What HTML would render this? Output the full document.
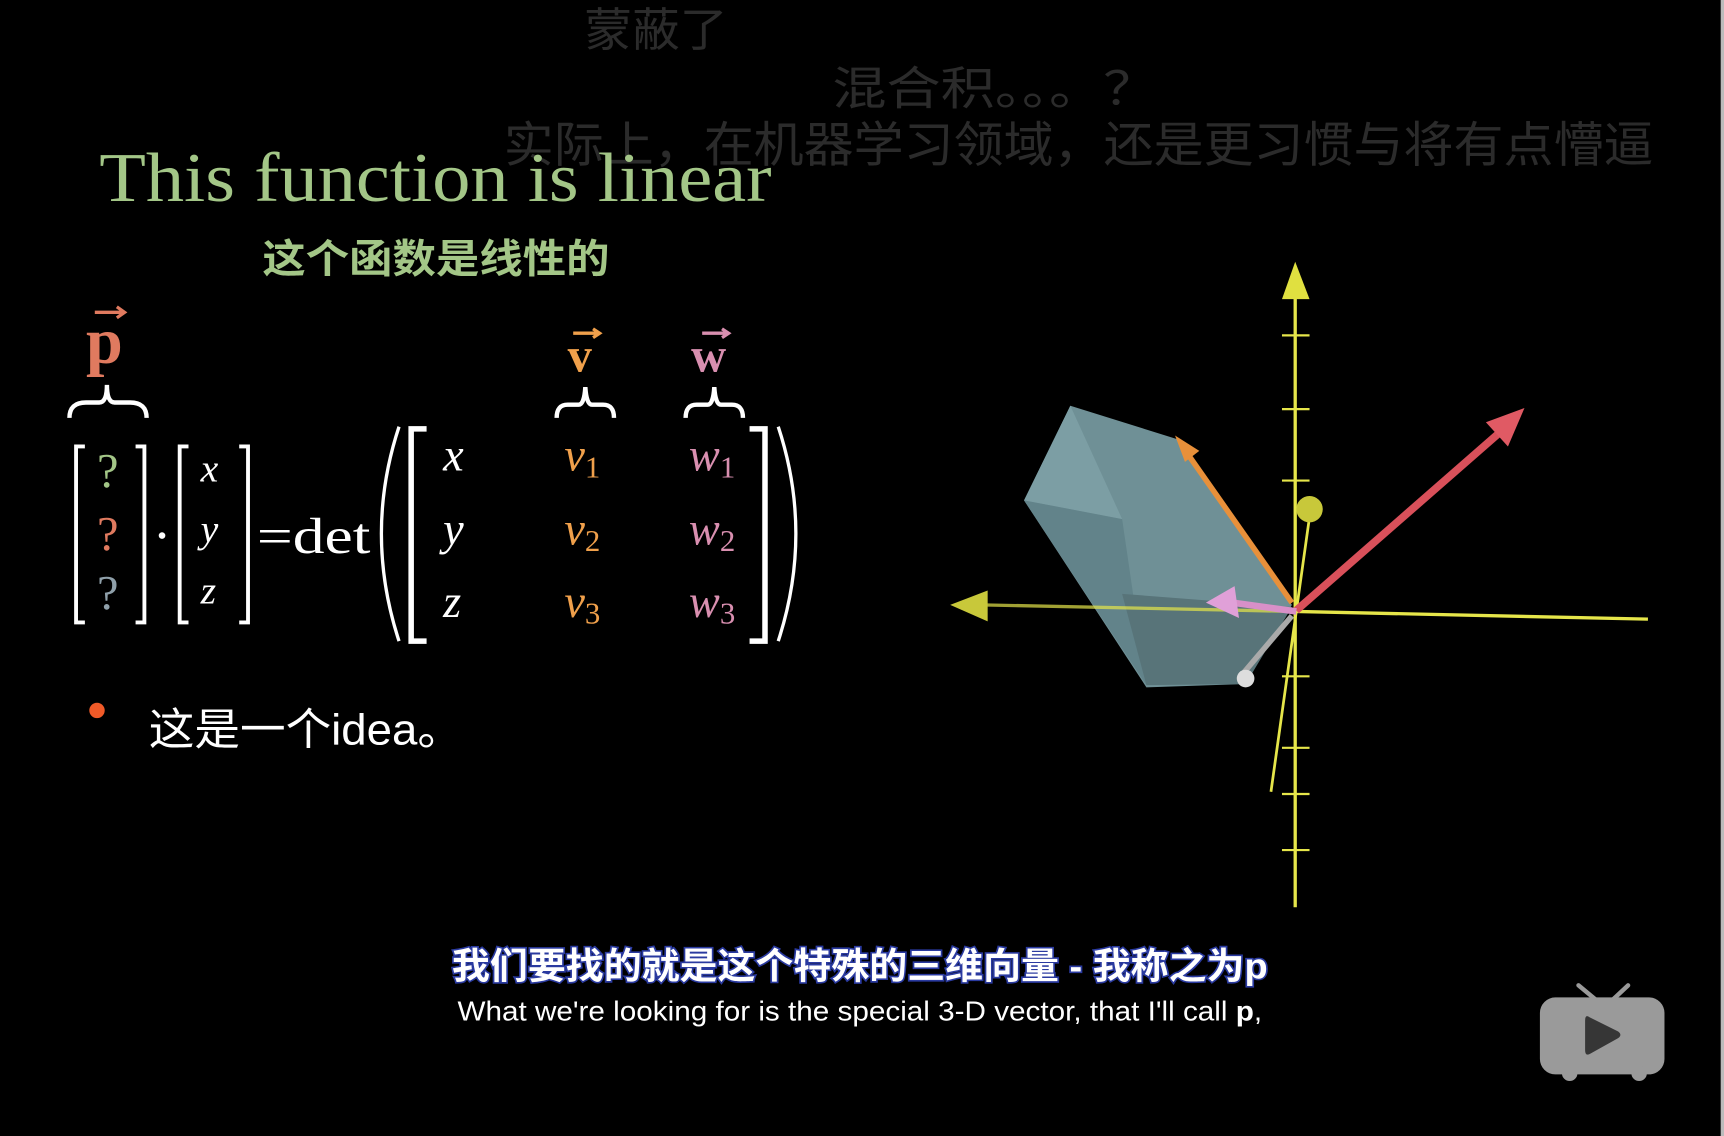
<!DOCTYPE html>
<html><head><meta charset="utf-8"><style>
html,body{margin:0;padding:0;background:#000;width:1724px;height:1136px;overflow:hidden}
svg{display:block}
.s{font-family:"Liberation Serif",serif}
.c{font-family:"Liberation Sans","Noto Sans CJK SC",sans-serif}
</style></head><body>
<svg width="1724" height="1136" viewBox="0 0 1564 1033" preserveAspectRatio="none" xmlns="http://www.w3.org/2000/svg">
<rect width="1564" height="1033" fill="#000"/>
<rect x="1561" y="0" width="3" height="1033" fill="#bbb"/>
<g class="c" fill="#2b2b2b" font-size="42">
<text x="530" y="42" textLength="130" lengthAdjust="spacingAndGlyphs">蒙蔽了</text>
<text x="755" y="95" textLength="295" lengthAdjust="spacingAndGlyphs">混合积。。。？</text>
<text x="457" y="147" font-size="44" textLength="1043" lengthAdjust="spacingAndGlyphs">实际上，在机器学习领域，还是更习惯与将有点懵逼</text>
</g>
<text class="s" x="90" y="183" font-size="64" fill="#a3c687" textLength="610" lengthAdjust="spacingAndGlyphs">This function is linear</text>
<text class="c" x="238" y="248" font-size="36" font-weight="bold" fill="#a3c687" textLength="315" lengthAdjust="spacingAndGlyphs">这个函数是线性的</text>
<g class="s" font-weight="bold">
<text x="78" y="330" font-size="60" fill="#e07a5f">p</text>
<text x="515" y="338" font-size="44" fill="#f0a04b">v</text>
<text x="627" y="338" font-size="44" fill="#d98fb0">w</text>
</g>
<g stroke-width="3" fill="none">
<path d="M86 284 H112 M106 279 L113 284 L106 289" stroke="#e07a5f"/>
<path d="M520 303 H543 M538 299 L544 303 L538 307" stroke="#f0a04b"/>
<path d="M637 303 H660 M655 299 L661 303 L655 307" stroke="#d98fb0"/>
</g>
<g stroke="#fff" stroke-width="4" fill="none">
<path d="M63 380 Q63 366 78 366 H90 Q97 366 97 350 Q97 366 104 366 H118 Q133 366 133 380"/>
<path d="M505 380 Q505 368 515 368 H525 Q530 368 531 352 Q532 368 537 368 H547 Q557 368 557 380"/>
<path d="M622 380 Q622 368 632 368 H642 Q647 368 648 352 Q649 368 654 368 H664 Q674 368 674 380"/>
</g>
<g stroke="#fff" stroke-width="3.5" fill="none">
<path d="M77 406 H69 V566 H77"/><path d="M123 406 H131 V566 H123"/>
<path d="M171 406 H163 V566 H171"/><path d="M217 406 H225 V566 H217"/>
<path d="M387 390 H373 V583 H387" stroke-width="5"/><path d="M680 390 H694 V583 H680" stroke-width="5"/>
<path d="M362 388 Q330 485 362 583" stroke-width="3"/>
<path d="M706 388 Q738 485 706 583" stroke-width="3"/>
</g>
<g class="s" font-size="44">
<text x="88" y="443" fill="#a3c687">?</text>
<text x="88" y="500" fill="#e07a5f">?</text>
<text x="88" y="554" fill="#8fa0aa">?</text>
</g>
<circle cx="147" cy="487" r="3" fill="#fff"/>
<g class="s" font-style="italic" fill="#fff">
<text x="182" y="438" font-size="36">x</text>
<text x="182" y="493" font-size="36">y</text>
<text x="182" y="549" font-size="36">z</text>
<text x="402" y="428" font-size="42">x</text>
<text x="402" y="495" font-size="42">y</text>
<text x="402" y="561" font-size="42">z</text>
</g>
<text class="s" x="233" y="503" font-size="46" fill="#fff" textLength="103" lengthAdjust="spacingAndGlyphs">=det</text>
<g class="s" font-size="42" font-style="italic">
<text x="512" y="428" fill="#f0a04b">v<tspan font-size="28" font-style="normal" dy="6">1</tspan></text>
<text x="512" y="495" fill="#f0a04b">v<tspan font-size="28" font-style="normal" dy="6">2</tspan></text>
<text x="512" y="561" fill="#f0a04b">v<tspan font-size="28" font-style="normal" dy="6">3</tspan></text>
<text x="625" y="428" fill="#d98fb0">w<tspan font-size="28" font-style="normal" dy="6">1</tspan></text>
<text x="625" y="495" fill="#d98fb0">w<tspan font-size="28" font-style="normal" dy="6">2</tspan></text>
<text x="625" y="561" fill="#d98fb0">w<tspan font-size="28" font-style="normal" dy="6">3</tspan></text>
</g>
<circle cx="88" cy="646" r="7" fill="#f05a28"/>
<text class="c" x="135" y="677" font-size="40" fill="#fff" textLength="285" lengthAdjust="spacingAndGlyphs">这是一个idea。</text>
<g stroke="#e6e64a" stroke-width="3" fill="none">
<line x1="1175" y1="265" x2="1175" y2="825"/>
<line x1="1175" y1="556" x2="1495" y2="563"/>
<line x1="1153" y1="720" x2="1188" y2="470" stroke-width="2.5"/>
<path d="M1163 305H1188M1163 372H1188M1163 437H1188M1163 615H1188M1163 680H1188M1163 722H1188M1163 773H1188" stroke-width="2"/>
</g>
<polygon points="1175,238 1163,272 1188,272" fill="#e0e040"/>
<circle cx="1188" cy="463" r="12" fill="#c8c83a"/>
<polygon points="971,369 1070,400 1172,550 1130,622 1040,625 929,455" fill="#6f9096"/>
<polygon points="971,369 1018,472 929,455" fill="#7c9ea4"/>
<polygon points="929,455 1018,472 1040,623" fill="#62838a"/>
<polygon points="1018,540 1172,552 1130,622 1040,623" fill="#587479"/>
<line x1="890" y1="550" x2="1175" y2="556" stroke="#e6e64a" stroke-width="3" opacity="0.7"/>
<polygon points="862,550 896,537 896,565" fill="#c8c83a"/>
<line x1="1072" y1="405" x2="1172" y2="548" stroke="#e8903a" stroke-width="5"/>
<polygon points="1066,396 1088,410 1075,420" fill="#e8903a"/>
<line x1="1176" y1="555" x2="1370" y2="385" stroke="#d9505a" stroke-width="7"/>
<polygon points="1383,371 1348,384 1368,406" fill="#e05a64"/>
<line x1="1176" y1="556" x2="1118" y2="548" stroke="#d890c8" stroke-width="6"/>
<polygon points="1094,548 1120,533 1124,562" fill="#e0a0d8"/>
<line x1="1172" y1="560" x2="1128" y2="612" stroke="#aaa" stroke-width="5"/>
<circle cx="1130" cy="617" r="8" fill="#ddd"/>
<text class="c" x="410" y="890" font-size="33" font-weight="bold" fill="#fff" stroke="#2a3aa0" stroke-width="3" paint-order="stroke" textLength="740" lengthAdjust="spacingAndGlyphs">我们要找的就是这个特殊的三维向量 - 我称之为p</text>
<text class="c" x="415" y="928" font-size="25" fill="#fff" textLength="730" lengthAdjust="spacingAndGlyphs">What we're looking for is the special 3-D vector, that I'll call <tspan font-weight="bold">p</tspan>,</text>
<g fill="#9a9a9a">
<line x1="1432" y1="896" x2="1450" y2="911" stroke="#9a9a9a" stroke-width="4" stroke-linecap="round"/>
<line x1="1477" y1="896" x2="1461" y2="911" stroke="#9a9a9a" stroke-width="4" stroke-linecap="round"/>
<rect x="1397" y="907" width="113" height="70" rx="14"/>
<circle cx="1424" cy="976" r="7"/><circle cx="1487" cy="976" r="7"/>
</g>
<path d="M1442 925 Q1438 922 1438 928 V955 Q1438 961 1443 958 L1468 944 Q1472 941 1468 938 Z" fill="#363636"/>
</svg>
</body></html>
